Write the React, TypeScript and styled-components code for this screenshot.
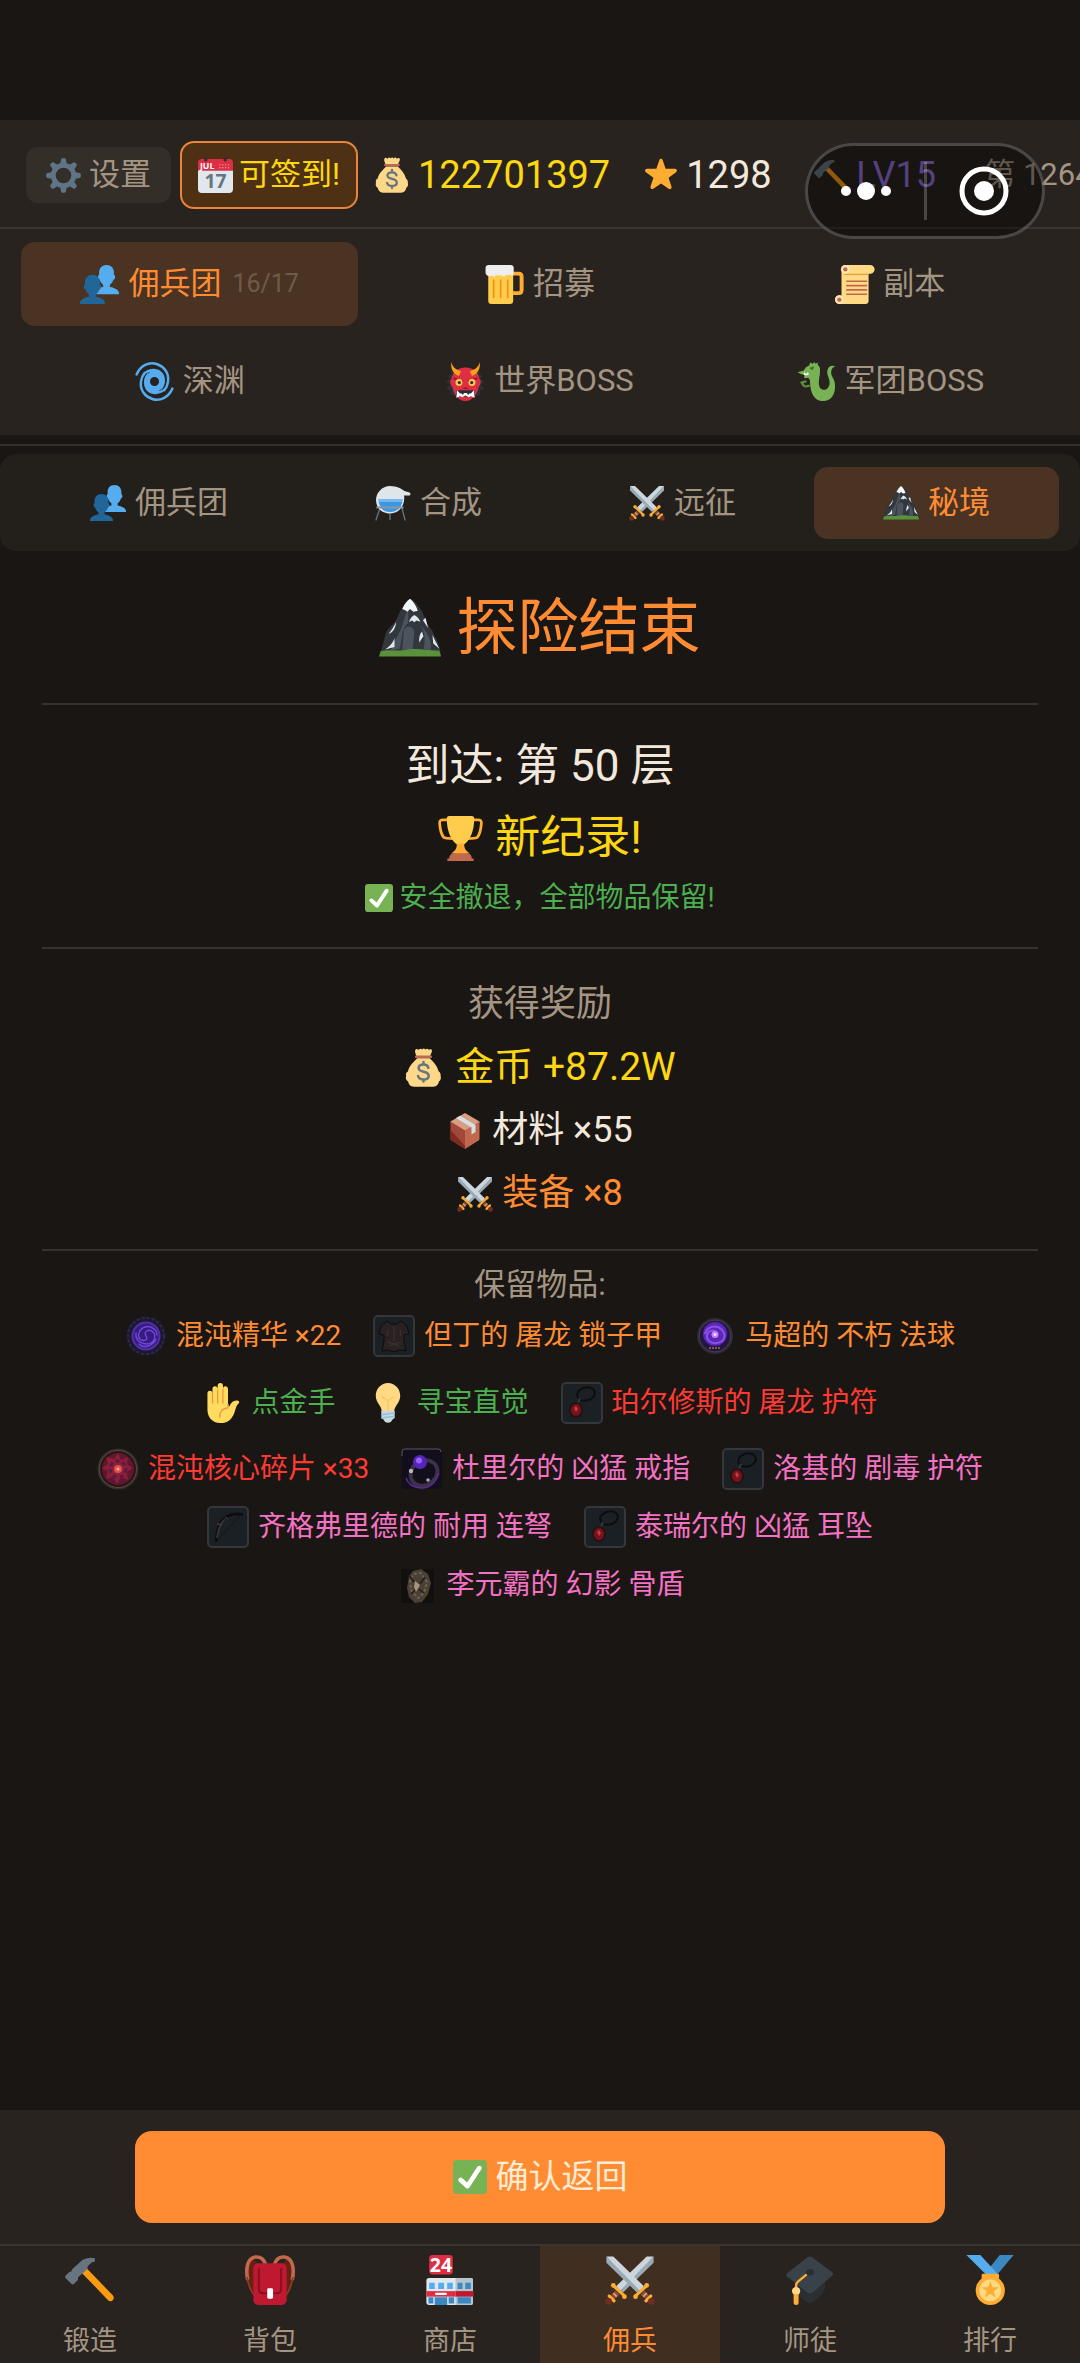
import React from "react";
import styled, { createGlobalStyle, css } from "styled-components";

const color = {
  page: "#1a1613",
  panel: "#28231f",
  subPanel: "#23201c",
  line: "#3b3430",
  active: "#4a3323",
  orange: "#ff8c33",
  gold: "#fdd70f",
  muted: "#a49583",
  cream: "#f3e8dc",
  green: "#4caf50",
  red: "#ff3a33",
  pink: "#f472c4",
};

const GlobalStyle = createGlobalStyle`
  *, *::before, *::after { box-sizing: border-box; }
  body {
    margin: 0;
    background: ${color.page};
    color: ${color.cream};
    font-family: Roboto, "Noto Sans CJK SC", sans-serif;
  }
  button {
    margin: 0;
    padding: 0;
    border: 0;
    background: none;
    color: inherit;
    font: inherit;
    cursor: pointer;
  }
  h1, h2, p, ul { margin: 0; padding: 0; font-weight: 400; }
  ul { list-style: none; }
`;

/* ---------- icons ---------- */

const Glyph = styled.svg<{ $size: number }>`
  display: block;
  flex: none;
  width: ${(p) => p.$size}px;
  height: ${(p) => p.$size}px;
  overflow: visible;
`;

const Bust = ({ fill }: { fill: string }) => (
  <path
    fill={fill}
    d="M14.6 20.4v-2.2c1.5-1 2.8-2.700 3.300-4.800.9 0 1.500-1 1.500-2.200 0-1-.5-1.900-1.100-2.100C19 4 16.600 0 11.500 0S4 4 4.700 9.100c-.6.200-1.100 1.100-1.100 2.100 0 1.200.6 2.200 1.500 2.200.5 2.100 1.800 3.800 3.300 4.800v2.200C4 21.100 0 23.300 0 26v1h23v-1c0-2.700-4-4.900-8.400-5.600z"
  />
);

const drawings = {
  people: (
    <>
      <g transform="translate(13 0)"><Bust fill="#55acee" /></g>
      <g transform="translate(0 9)"><Bust fill="#226699" /></g>
    </>
  ),
  gear: (
    <g fill="none" stroke="#5f7485">
      <circle cx="18" cy="18" r="10.500" strokeWidth="5" />
      <g fill="#5f7485" stroke="none">
        {[0, 45, 90, 135, 180, 225, 270, 315].map((a) => (
          <path key={a} transform={`rotate(${a} 18 18)`} d="M14.500 7l1-5.500Q15.800.200 17 .200h2q1.200 0 1.500 1.300l1 5.500z" />
        ))}
      </g>
    </g>
  ),
  calendar: (
    <>
      <path fill="#e1e8ed" d="M0 10h36v22a4 4 0 0 1-4 4H4a4 4 0 0 1-4-4z" />
      <path fill="#dd2e44" d="M0 5a4 4 0 0 1 4-4h28a4 4 0 0 1 4 4v8H0z" />
      <g fill="#292f33"><circle cx="8" cy="1.800" r="1.800" /><circle cx="28" cy="1.800" r="1.800" /></g>
      <g fill="#f4abba">
        {[22.500, 25.500, 28.500, 31.500].map((x) => (
          <React.Fragment key={x}><circle cx={x} cy="7" r=".7" /><circle cx={x} cy="10" r=".7" /></React.Fragment>
        ))}
      </g>
      <text x="2" y="11" fill="#fff" fontFamily="Open Sans, sans-serif" fontWeight="700" fontSize="9">JUL</text>
      <text x="18" y="31" fill="#66757f" textAnchor="middle" fontFamily="Open Sans, sans-serif" fontWeight="700" fontSize="20">17</text>
    </>
  ),
  bag: (
    <>
      <path fill="#fdd888" d="M31.900 21.500c1.300.800 2.300 2.500 1.900 4.300.8 2.200-.2 4.200-1.600 5.200-.3 2.600-2 4.700-5 4.700H9c-3 0-4.800-2-5.200-4.700-1.700-1-2.700-3.200-1.800-5.400-.6-1.600.1-3.200 1.600-4 1.400-5.800 5.200-8.600 8.600-12.200h11.600c3.400 3.600 6.700 6.400 8.100 12.100z" />
      <path fill="#fdd888" d="M11.500 7.500C11 5.500 9.500 3.500 10.500 1.500c.7-1.400 2-.2 3 .2 1-.9 2-1.700 3.200-.4 1-1.300 2.300-1 3 .1 1.200-1.200 2.300-1 3.200.3 1.200-.8 2.700-1 2.900.5.200 1.600-1.300 3.600-1.800 5.300z" />
      <path fill="#bf6952" d="M11 7h14q.9 0 .9 1.100T25 9.200H11q-.9 0-.9-1.100T11 7z" />
      <path fill="none" stroke="#67757f" strokeWidth="2.300" strokeLinecap="round" d="M18 13v2m0 14v2M22.500 18.300c-.5-2-2.200-3-4.500-3s-4.500 1-4.500 3.200c0 4.700 9.300 2.200 9.300 7 0 2.400-2.200 3.500-4.800 3.500-2.700 0-4.500-1.200-5-3.200" />
    </>
  ),
  star: (
    <path fill="#ffac33" d="M27.300 33c-.4 0-.8-.1-1.200-.4L18 26.900l-8.100 5.700c-1.400 1-3.500-.3-3-2.500l3.100-9.300-8-5.700c-1.500-1.200-.8-3.500 1.100-3.600l10-.1 3.200-9.300c.6-1.700 2.800-1.700 3.400 0l3.200 9.300 10 .1c1.900.1 2.600 2.400 1.100 3.600l-8 5.700 3.100 9.300c.4 1.500-.6 2.900-1.800 2.900z" />
  ),
  hammer: (
    <>
      <path fill="#f99b12" d="M12 12.700l3.400-3.300 19 19.600c1 1 1 2.500 0 3.500-.9 1-2.500 1-3.400 0z" />
      <path fill="#66757f" d="M21.500 2.400c-3.200-1-7.600 0-10.200 2.200L5.600 9.900C4.900 10.600 5 11.600 4.300 12l-1.200.2-2.600 2.500c-.6.600-.5 1.500 0 2l4 4c.6.600 1.500.6 2.100 0l2.500-2.500c.6-.6-.1-1.800.5-2.400l6-5.200c.8-.7.3-1.500 1-2.600 1.200-1.800 2.900-3.300 4.900-3.400z" />
    </>
  ),
  beer: (
    <>
      <path fill="none" stroke="#ffac33" strokeWidth="3.600" d="M26 8h5q2.800 0 2.800 2.800V23q0 3-3 3H25" />
      <path fill="#ffcc4d" d="M3 8h23v25q0 3-3 3H6q-3 0-3-3z" />
      <path fill="none" stroke="#f4900c" strokeWidth="1.500" strokeLinecap="round" d="M8 14v16M14.500 14v16M21 14v16" />
      <path fill="#eee" d="M3.500 0h20q3 0 3 3v5q0 1.800-1.600 1.800-1.500 0-2-1.300-1.300 1.500-3.200.3c-.8 2.300-4 2.300-4.700.3-1.800 1.400-3.300.4-4-.3-1 2.500-4 2-4.600 1-2.500 1.600-5.900-.1-5.900-2.800V3q0-3 3-3z" />
    </>
  ),
  scroll: (
    <>
      <path fill="#ffd983" d="M9 0h23a4 4 0 0 1 1 8h-2v25a3 3 0 0 1-3 3H4a4 4 0 1 1 1-7.900h1V4a4 4 0 0 1 3-4z" />
      <path fill="#e39f3d" d="M9 8h22v1.200H8z" />
      <circle cx="9.500" cy="4" r="4" fill="#ffe8b6" /><circle cx="9.500" cy="4" r="2" fill="#c1694f" />
      <circle cx="4" cy="32" r="4" fill="#ffe8b6" /><circle cx="4" cy="32" r="2" fill="#c1694f" />
      <path stroke="#c1694f" strokeWidth="1.600" strokeLinecap="round" d="M11 15h18M11 19h18M11 23h18M11 27h18" />
    </>
  ),
  spiral: (
    <>
      <circle cx="18" cy="18" r="6.800" fill="none" stroke="#55acee" strokeWidth="5.200" />
      {[0, 180].map((a) => (
        <g key={a} transform={`rotate(${a} 18 18)`} fill="none" stroke="#55acee" strokeLinecap="round">
          <path fill="#55acee" stroke="none" d="M5 17C6 9 13 5.500 19 6.500c6 1 9.500 6 8.500 12.500-.6 3-1.500 5-3.500 7 0-8-2-15-8-16.500-5-.5-9 2-11 7.500z" />
          <path strokeWidth="2.300" d="M1.500 11.500C5 3 13-.500 20 1.800c7 2.400 11.500 8.500 10.500 16-.4 3.700-1.600 6-3.500 8.200" />
        </g>
      ))}
    </>
  ),
  ogre: (
    <>
      <path fill="#2a3438" d="M4 9l2 2-4 2 3 3-5 2 4 3-4 4 5 1-1 4 6 2h16l6-2-1-4 5-1-4-4 4-3-5-2 3-3-4-2 2-2z" />
      <path fill="#dd2e44" d="M18 5c-8 0-12 5-13 11-2 0-1 6 1 7 1 6 5 13 12 13s11-7 12-13c2-1 3-7 1-7C30 10 26 5 18 5z" />
      <path fill="#f9a01b" d="M12 13C6 11 4 5 5 0c1 5 4 7 9 8.500zM24 13c6-2 8-8 7-13-1 5-4 7-9 8.500z" />
      <path fill="#a0122a" d="M7 14l9 3-1 2-8-3zM29 14l-9 3 1 2 8-3zM15 25l3-2 3 2z" />
      <circle cx="12" cy="19" r="3.200" fill="#ffcc4d" /><circle cx="24" cy="19" r="3.200" fill="#ffcc4d" />
      <circle cx="12.300" cy="19" r="1.500" fill="#292f33" /><circle cx="23.700" cy="19" r="1.500" fill="#292f33" />
      <path fill="#292f33" d="M10 26h16l1 6H9z" />
      <path fill="#fff" d="M9.500 33l.8-7 2.700 3h1.500l1 1.500 1.200-2h2.600l1.200 2 1-1.500H23l2.700-3 .8 7-3.500-1.500-2 1-3-1.500-3 1.500-2-1z" />
    </>
  ),
  dragon: (
    <>
      <path fill="#77b255" d="M12 17c0 8 2 19 12 19 8 0 12-7 11-16-.6-6-5-7-3-13 .5-1.500 2-2.500 3.500-3-4-1.500-7 .500-7.500 4-.6 5 2.600 7 2 12-.5 4-3 6-6 5.500-5-.8-4-8-3-14 .6-5 .500-7-2-9l.500-2-2.500 1L16 0l-1.500 1.500L12 .500 11.500 3 8 5 6 8 .500 9.500 3.500 11 7 12l-.5 3 4-.5z" />
      <path fill="#3e721d" d="M11 5.500l5-1.500-1.500 3.500z" />
      <path fill="#fff" d="M6 11l1-1.500 1.300 1.500L10 9.500l1 1.500-1 1.200H7z" />
      <path fill="none" stroke="#5c913b" strokeWidth="2" strokeLinecap="round" d="M5 20c1 3 3 3 6 2M8 18l-4 1" />
    </>
  ),
  alembic: (
    <>
      <path fill="none" stroke="#66757f" strokeWidth="1.300" strokeLinecap="round" d="M5 23L1 35M27 23l3 12M15 29v5.500" />
      <path fill="#dfe5e9" d="M15 1C22 1 27 4 29.500 6L34.500 7.500c1.500.6 1.200 3-.5 3L29 10.500c1.500 8-3.500 18-14 18C6 28.500 1 22 1 15S7 1 15 1z" />
      <path fill="#3d97e0" d="M3.500 14h24c.4 7-4.500 13-12.500 13S3.500 21 3.500 14z" />
      <path fill="#6fbaf3" d="M3.500 14h24l-.8 3H4z" />
      <path fill="#8899a6" d="M1.500 21.500h27v2h-27z" />
    </>
  ),
  swords: (
    <>
      {[false, true].map((flip) => (
        <g key={String(flip)} transform={flip ? "translate(36 0) scale(-1 1)" : undefined}>
          <path fill="#99aab5" d="M35 1v4.500L13 27l-4-3.500z" />
          <path fill="#ccd6dd" d="M35 1h-5L8 22.500l3 3z" />
          <path fill="#8a4b38" d="M7.500 25.500l3 3-6 5.500L2 31.500z" />
          <path stroke="#d99e82" strokeWidth="1.300" d="M6 27.500l2.500 2.500" />
          <path stroke="#ffac33" strokeWidth="2.200" strokeLinecap="round" d="M6 22l8 7.500M3 29.500l3.500 3.500" />
          <circle cx="6" cy="21.800" r="1.700" fill="#ffac33" /><circle cx="14" cy="30" r="1.700" fill="#ffac33" />
          <circle cx="2.600" cy="33.400" r="2.400" fill="#6e2f22" />
        </g>
      ))}
    </>
  ),
  mountain: (
    <>
      <path fill="#31373d" d="M18 1C15 3 12 9 10 13c-1 2.500-5 5-6 8s-2 9-4 13h36c-.5-5-2-9-4-12-1-4-4-5-5-9-1.500-5-6-11-9-12z" />
      <path fill="#4b545d" d="M17 8c-3 3-2.500 9-6 14-1.500 2.500-3 6-4 9l5-1c1.500-6 1-12 5-15zM23 16c4 3 4 9 3 14l4 1c1-5-2-12-7-15zM14.500 19c2-3 5-2 6 1l-1 11h-6z" />
      <path fill="#f5f8fa" d="M18 1c-2 1.500-3.500 3.500-4.500 6l1.500.5 1.500 1L18 7l2 1.500 2.500-.5C21.500 5 20 2.500 18 1z" />
      <path fill="#e1e8ed" d="M20.500 10.500c-1.500.8-2.500 2.300-3 4l1.700-.8 1.300.9 1.300-1 2.200.8c-.5-1.600-2-3.200-3.500-3.900zM10 14.500c-1.500 3-3 5-4.500 7 2.500-1 4-3 4.500-7zM27 12l1.500 6-3-4.500zM9 24c-1 3-3 5-5.500 6.500L9 29zM25 20c-1.500 1.500-2 4-1.500 6.500.7-1.500 1.500-2.500 2.300-3.500zM31 22l4 8-3.500-3z" />
      <path fill="#5c913b" d="M1 31.500c6-1.500 10 .500 16-1 7-1 12 1 18 .5l1 3.500H0z" />
    </>
  ),
  trophy: (
    <>
      <path fill="none" stroke="#ffac33" strokeWidth="2.200" d="M9 3H4Q1 3 1.300 6 2 14 4.500 17q1 1 8 1M27 3h5q3 0 2.700 3-.7 8-3.200 11-1 1-8 1" />
      <path fill="#ffcc4d" d="M7 2q0-2 2-2h18q2 0 2 2c0 11-4 18-8 20.500v3L23 30H13l2-4.500v-3C11 20 7 13 7 2z" />
      <path fill="#ffac33" d="M15.500 22h5c.3 4 2 6 5 8H10.500c3-2 4.700-4 5-8z" />
      <path fill="#c1694f" d="M9 34q0-4 4-4h10q4 0 4 4h1.500v2h-21v-2z" />
    </>
  ),
  check: (
    <>
      <rect width="36" height="36" rx="4" fill="#77b255" />
      <path fill="#fff" d="M29.280 6.362c-1.156-.751-2.704-.422-3.458.736L14.936 23.877l-5.029-4.650c-1.014-.938-2.596-.875-3.533.138-.937 1.014-.875 2.596.139 3.533l7.209 6.666c.480.445 1.090.665 1.696.665.673 0 1.534-.282 2.099-1.139.332-.506 12.500-19.270 12.500-19.270.751-1.159.421-2.707-.737-3.458z" />
    </>
  ),
  parcel: (
    <>
      <path fill="#d99e82" d="M18 0L3.500 8.500v1L18 18l14.500-8.500v-1z" />
      <path fill="#a3473a" d="M3.500 8.500L18 17.500V36L4.500 27.500q-1-.7-1-2z" />
      <path fill="#c1694f" d="M32.500 8.500L18 17.500V36l13.500-8.500q1-.7 1-2z" />
      <path fill="#7e2a20" d="M3.500 17L18 33v3L4.500 27.500q-1-.7-1-2z" />
      <path fill="#d5dfe6" d="M9 5l4-2.300L28.500 12v7l-4 2.500v-7z" />
    </>
  ),
  hand: (
    <>
      <path fill="#ffdc5d" d="M4 9.500q0-2.500 2.200-2.500t2.300 2.500V6q0-3 2.300-3t2.400 3V3q0-3 2.400-3T18 3v3q0-3 2.200-3t2.300 3v14.500l1.500.5c.6-3 4-6 7.500-5 1.500.4 1.400 1.800.2 2.800C29 21 29.500 26 26 31c-2 3-5 5-10.500 5C8 36 4 30 4 24z" />
      <path fill="none" stroke="#ef9645" strokeWidth="1.200" strokeLinecap="round" d="M8.600 9v9M13.200 7v11M17.900 6v12M22.500 19v3.500c-5 0-8 4-7.500 8.500" />
    </>
  ),
  bulb: (
    <>
      <path fill="#ffd983" d="M29 11.500C29 18 23.500 20.500 23.500 26h-11C12.500 20.500 7 18 7 11.500 7 5 12 0 18 0s11 5 11 11.500z" />
      <path fill="none" stroke="#ffc765" strokeWidth="1.300" d="M12.500 12l5.500 4 5.500-4M18 16v9" />
      <path fill="#ccd6dd" d="M12 25h12v6q0 1-1.500 1.500L20.500 35q-2.500 1.500-5 0l-2-2.500Q12 32 12 31z" />
      <path stroke="#8ebfdf" strokeWidth="1.300" d="M12 28.500l12-1.500M12 31.500l12-1.500" />
    </>
  ),
  backpack: (
    <>
      <path fill="#662113" d="M5 2C0 5 0 13 2 20c1 5 3 9 7 11V6zM31 2c5 3 5 11 3 18-1 5-3 9-7 11V6z" />
      <path fill="none" stroke="#c1694f" strokeWidth="2.600" d="M15 8C14 3 11 1 7.500 1.500 1 2.500.500 11 2 18M21 8c1-5 4-7 7.500-6.500C35 2.500 35.500 11 34 18" />
      <path fill="none" stroke="#8a3b28" strokeWidth="1.200" d="M1.500 16c1 6 3 11 6 14M34.500 16c-1 6-3 11-6 14" />
      <rect x="6" y="6" width="24" height="30" rx="3.500" fill="#be1931" />
      <path fill="none" stroke="#8f0d22" strokeWidth="1.500" d="M10 9.500v15q0 3 3 3h10q3 0 3-3v-15" />
      <rect x="16" y="24" width="4.200" height="7.500" rx="1" fill="#fff" />
    </>
  ),
  store: (
    <>
      <rect x="3" width="17" height="14" rx="2.500" fill="#dd2e44" />
      <text x="11.500" y="12" fill="#fff" textAnchor="middle" fontFamily="Open Sans, sans-serif" fontWeight="700" fontSize="14">24</text>
      <path fill="#e1e8ed" d="M1 18.500q0-2 2-2h30q1.500 0 1.500 1.500v16.500q0 1.500-1.500 1.500H3q-2 0-2-2z" />
      <path fill="#b5c3cd" d="M22 16.500h11.500q1 0 1 1.500v16.500q0 1.500-1.500 1.500H22z" />
      <path fill="#55acee" d="M3 20h4v4.500H3zM9.500 20h4.200v4.500H9.500zM16 20h4v4.500h-4z" />
      <path fill="#3b88c3" d="M23.500 20h3.500v4.500h-3.500zM29 20h4v4.500h-4zM23.500 30.500h9.500V35h-9.500zM2.500 30.500H6V35H2.500zM7 30.500h9V36H7zM17 30.500h4V35h-4z" />
      <path fill="#dd2e44" d="M1 26h21v4H1z" /><path fill="#be1931" d="M22 26h13v4H22z" />
      <path stroke="#fff" strokeWidth="1.500" strokeLinecap="round" d="M8 28h7" />
    </>
  ),
  cap: (
    <>
      <path fill="#292f33" d="M8 21l10 4 11-8v5c0 3-1 5-3 7l-6 5c-1.500 1-3 1-4.500 0L10 29z" />
      <path fill="#394149" d="M16.500 1.500q1.500-1 3 0L34 12.500q1.300 1 0 2.200L20 27q-2 1.500-4 0L1.500 15.500q-1.300-1.200 0-2.300z" />
      <ellipse cx="18" cy="12.500" rx="3" ry="2.300" fill="#292f33" />
      <path fill="none" stroke="#ffac33" strokeWidth="1.800" strokeLinecap="round" d="M15 14.500L9.500 19q-1.500 1.200-1.500 3v3" />
      <circle cx="8" cy="26" r="3" fill="#ffd983" />
      <path fill="#ffac33" d="M6.200 28h3.600v6.500q0 1.500-1.800 1.500t-1.800-1.500z" />
    </>
  ),
  medal: (
    <>
      <path fill="#3b88c3" d="M25 0h10L22.500 15l-5.500-5z" />
      <path fill="#55acee" d="M1 0h10l12 13-5 4z" />
      <path fill="#ffac33" d="M13 13.500h10.500q1 0 1 1v2.500H12v-2.500q0-1 1-1z" />
      <circle cx="18.200" cy="25.500" r="10.500" fill="#ffac33" />
      <circle cx="18.200" cy="25.500" r="7.800" fill="#ffd983" />
      <path fill="#ffac33" d="M18.200 19l1.600 4.300h4.600l-3.700 2.800 1.400 4.500-3.900-2.700-3.900 2.700 1.400-4.500-3.700-2.800h4.600z" />
    </>
  ),
};

type IconName = keyof typeof drawings;

const Icon = ({ name, size }: { name: IconName; size: number }) => (
  <Glyph $size={size} viewBox="0 0 36 36" aria-hidden="true">{drawings[name]}</Glyph>
);

/* ---------- item artwork ---------- */

const Tile = () => (
  <rect x="1" y="1" width="40" height="40" rx="4" fill="#1b2025" stroke="#34373b" strokeWidth="2" />
);

const artwork = {
  essence: (
    <>
      <circle cx="21" cy="21" r="20" fill="#1d1730" />
      <circle cx="21" cy="21" r="18" fill="none" stroke="#2f2a44" strokeWidth="2" strokeDasharray="3 2" />
      <circle cx="21" cy="21" r="13.500" fill="#371b80" stroke="#4f32a6" strokeWidth="2" />
      <path fill="none" stroke="#7148d6" strokeWidth="1.400" strokeLinecap="round" d="M21 21c-3-4 3-8 7-4s1 12-6 12-12-5-11-11M21 21c3 4-3 6-6 3s-1-10 5-12 12 3 12 8M14 29c5 5 14 2 17-5" />
    </>
  ),
  armor: (
    <>
      <Tile />
      <path fill="#2a2222" stroke="#0c0a0a" d="M14 6l4 3h6l4-3 6 5 2 8-5 1v6l2 10-6-1-6 2-6-2-6 1 2-10v-6l-5-1 2-8z" />
      <path fill="none" stroke="#41322f" d="M21 12v14M14 27l7 2 7-2M16 31l5-2 5 2M15 15l-1 6M27 15l1 6" />
    </>
  ),
  orb: (
    <>
      <circle cx="21" cy="21" r="18" fill="#2f2936" />
      <circle cx="21" cy="21" r="16" fill="#24163e" stroke="#4a3f55" />
      <circle cx="21" cy="19" r="12" fill="#5a27b8" />
      <path fill="none" stroke="#8a52e0" strokeWidth="2" d="M11 19c2-8 12-10 17-4s2 12-5 13-11-4-10-8 6-6 9-3" />
      <circle cx="21" cy="19.500" r="3.500" fill="#c879ff" /><circle cx="21" cy="19.500" r="1.500" fill="#ffe0ff" />
      <path stroke="#7b5a4a" strokeWidth="2" strokeDasharray="2 1" d="M15 33h12" />
    </>
  ),
  amulet: (
    <>
      <Tile />
      <ellipse cx="25" cy="12" rx="9" ry="6.500" fill="none" stroke="#0c0d10" strokeWidth="2" transform="rotate(-15 25 12)" />
      <path stroke="#35383d" strokeWidth="2" d="M19 16l-2 5" />
      <ellipse cx="15" cy="28" rx="7" ry="8" fill="#231314" />
      <ellipse cx="15" cy="28" rx="5" ry="6" fill="#7a121b" />
      <path fill="#c23c42" d="M13 26l2-2 2 3-2 3z" />
    </>
  ),
  core: (
    <>
      <circle cx="21" cy="21" r="20.500" fill="#35302a" />
      <circle cx="21" cy="21" r="18.500" fill="#2a1418" stroke="#574a3c" />
      <circle cx="21" cy="21" r="16" fill="#5f1630" />
      <path fill="#8c1f36" d="M21 5l3 7 7-3-1 7 6 4-6 4 1 8-7-3-4 7-4-7-7 2 2-8-6-3 6-4-2-7 8 2z" />
      <circle cx="21" cy="21" r="8" fill="none" stroke="#561a4c" strokeWidth="3" strokeDasharray="4 3" />
      <circle cx="21" cy="21" r="4" fill="#e2504c" /><circle cx="21" cy="21" r="1.500" fill="#ffb09a" />
    </>
  ),
  ring: (
    <>
      <rect x="1" y="1" width="40" height="40" rx="4" fill="#120e1b" />
      <path fill="none" stroke="#5b5862" d="M1 8V4q0-3 3-3h33q3 0 3 3" />
      <ellipse cx="23" cy="25" rx="14" ry="12" fill="none" stroke="#3a3248" strokeWidth="4" transform="rotate(-35 23 25)" />
      <path fill="none" stroke="#5f2a90" strokeWidth="1.500" d="M5 30q3 9 15 10t18-15" />
      <circle cx="19" cy="14" r="7" fill="#5524b8" /><circle cx="18" cy="12.500" r="3" fill="#9b60fa" />
      <circle cx="10" cy="23" r="2.200" fill="#b9b4c4" /><circle cx="27" cy="32" r="1.800" fill="#a9a3b8" />
    </>
  ),
  bow: (
    <>
      <Tile />
      <path fill="none" stroke="#0e0e10" strokeWidth="3" d="M9 36q1-18 9-24t18-3" />
      <path fill="none" stroke="#44383a" strokeWidth="1.500" d="M10 32q2-14 8-19M10 18l5 1M18 11l3 2" />
      <path stroke="#14161a" d="M10 34L34 9" />
    </>
  ),
  shield: (
    <>
      <rect x="5" y="5" width="33" height="34" fill="#11100f" />
      <path fill="#4a4035" d="M17 7l8-2 7 5 3 9-3 11-6 8-7 1-6-6-2-9 2-12z" />
      <path fill="none" stroke="#6f6250" strokeWidth="2" strokeDasharray="3 2" d="M18 10l7-1 6 9-3 11-6 5-7-8-1-10z" />
      <path fill="#a3957e" d="M19 17l5 4-4 7-2-5z" />
      <path stroke="#231d18" strokeWidth="1.500" d="M14 12l4 6M29 13l-5 7M15 30l4-4M28 29l-5-4" />
    </>
  ),
};

type ArtName = keyof typeof artwork;

const Art = ({ name }: { name: ArtName }) => (
  <Glyph $size={42} viewBox="0 0 42 42" aria-hidden="true">{artwork[name]}</Glyph>
);

/* ---------- layout ---------- */

const Page = styled.div`
  position: relative;
  display: flex;
  flex-direction: column;
  min-height: 100vh;
  padding-top: 120px;
  overflow: hidden;
`;

const Header = styled.header`
  display: flex;
  align-items: center;
  gap: 9px;
  padding: 21px 26px 18px;
  border-bottom: 2px solid ${color.line};
  background: ${color.panel};
  overflow: hidden;
`;

const HeaderButton = styled.button<{ $highlight?: boolean }>`
  display: flex;
  flex: none;
  align-items: center;
  gap: 8px;
  height: 56px;
  padding: 0 20px;
  border-radius: 12px;
  background: #342e29;
  color: ${color.muted};
  font-size: 31px;
  line-height: 40px;
  ${(p) =>
    p.$highlight &&
    css`
      gap: 6px;
      height: 68px;
      padding: 0 16px;
      border: 2px solid #e8853a;
      border-radius: 14px;
      background: #4e3114;
      color: ${color.gold};
    `}
`;

const Stats = styled.div`
  display: flex;
  flex: none;
  gap: 34px;
  margin-left: 7px;
`;

const Stat = styled.span<{ $tone: string; $size: number }>`
  display: flex;
  align-items: center;
  gap: 8px;
  min-width: 136px;
  color: ${(p) => p.$tone};
  font-size: ${(p) => p.$size}px;
  line-height: 48px;
  white-space: nowrap;
`;

const Capsule = styled.div`
  position: absolute;
  top: 143px;
  right: 35px;
  display: flex;
  align-items: center;
  width: 240px;
  height: 96px;
  border: 3px solid rgba(255, 255, 255, 0.22);
  border-radius: 48px;
  background: rgba(0, 0, 0, 0.42);
`;

const CapsuleButton = styled.button`
  display: flex;
  flex: 1;
  align-items: center;
  justify-content: center;
  height: 100%;
`;

const CapsuleDivider = styled.span`
  width: 3px;
  height: 58px;
  background: rgba(255, 255, 255, 0.22);
`;

const MainTabs = styled.nav`
  display: grid;
  grid-template-columns: repeat(3, 1fr);
  gap: 13px;
  padding: 13px 21px 12px;
  background: ${color.panel};
`;

const Tab = styled.button<{ $active?: boolean; $height: number }>`
  display: flex;
  flex: 1 1 auto;
  align-items: center;
  justify-content: center;
  gap: 9px;
  height: ${(p) => p.$height}px;
  border-radius: 14px;
  background: ${(p) => (p.$active ? color.active : "transparent")};
  color: ${(p) => (p.$active ? color.orange : color.muted)};
  font-size: 31px;
  line-height: 40px;
  white-space: nowrap;
`;

const TabCount = styled.small`
  margin-left: 2px;
  color: #705b4a;
  font-size: 25px;
`;

const Rule = styled.hr`
  width: 100%;
  height: 2px;
  margin: 9px 0 8px;
  border: 0;
  background: #35302b;
`;

const SubTabs = styled.nav`
  display: flex;
  gap: 9px;
  padding: 13px 21px 12px;
  border-radius: 16px;
  background: ${color.subPanel};
`;

const Result = styled.main`
  display: flex;
  flex: 1;
  flex-direction: column;
  padding: 0 42px;
  text-align: center;
`;

const Section = styled.section<{ $top: number; $bottom: number }>`
  padding: ${(p) => p.$top}px 0 ${(p) => p.$bottom}px;
  border-bottom: 2px solid #36312d;
`;

const Title = styled.h1`
  display: flex;
  align-items: center;
  justify-content: center;
  gap: 15px;
  color: ${color.orange};
  font-size: 61px;
  line-height: 62px;
`;

const Line = styled.p<{ $tone?: string; $size: number; $height: number; $gap?: number }>`
  display: flex;
  align-items: center;
  justify-content: center;
  gap: ${(p) => p.$gap ?? 12}px;
  color: ${(p) => p.$tone ?? color.cream};
  font-size: ${(p) => p.$size}px;
  line-height: ${(p) => p.$height}px;
`;

const KeptTitle = styled.h2`
  margin-bottom: 6px;
  padding-top: 10px;
  color: ${color.muted};
  font-size: 31px;
  line-height: 48px;
`;

const KeptList = styled.ul`
  display: flex;
  flex-wrap: wrap;
  align-items: center;
  justify-content: center;
  gap: 16px 32px;
  padding: 0 32px;
`;

const KeptItem = styled.li<{ $tone: string; $tall: boolean }>`
  display: flex;
  align-items: center;
  gap: 9px;
  height: ${(p) => (p.$tall ? 59 : 42)}px;
  color: ${(p) => p.$tone};
  font-size: 28px;
  line-height: 42px;
  white-space: nowrap;
`;

const ConfirmBar = styled.div`
  display: flex;
  justify-content: center;
  padding: 21px 0;
  background: ${color.panel};
`;

const ConfirmButton = styled.button`
  display: flex;
  align-items: center;
  justify-content: center;
  gap: 9px;
  width: 75%;
  height: 92px;
  border-radius: 17px;
  background: ${color.orange};
  color: #ffecd5;
  font-size: 33px;
  line-height: 40px;
`;

const BottomNav = styled.nav`
  display: grid;
  grid-template-columns: repeat(6, 1fr);
  border-top: 2px solid ${color.line};
  background: ${color.panel};
`;

const BottomTab = styled.button<{ $active?: boolean }>`
  display: flex;
  flex-direction: column;
  align-items: center;
  gap: 16px;
  padding: 9px 0 2px;
  background: ${(p) => (p.$active ? "#402e20" : "transparent")};
  color: ${(p) => (p.$active ? color.orange : color.muted)};
  font-size: 27px;
  line-height: 40px;
`;

/* ---------- data ---------- */

const mainTabs: { icon: IconName; label: string; count?: string }[] = [
  { icon: "people", label: "佣兵团", count: "16/17" },
  { icon: "beer", label: "招募" },
  { icon: "scroll", label: "副本" },
  { icon: "spiral", label: "深渊" },
  { icon: "ogre", label: "世界BOSS" },
  { icon: "dragon", label: "军团BOSS" },
];

const subTabs: { icon: IconName; label: string }[] = [
  { icon: "people", label: "佣兵团" },
  { icon: "alembic", label: "合成" },
  { icon: "swords", label: "远征" },
  { icon: "mountain", label: "秘境" },
];

const keptItems: { art?: ArtName; icon?: IconName; label: string; tone: string }[] = [
  { art: "essence", label: "混沌精华 ×22", tone: color.orange },
  { art: "armor", label: "但丁的 屠龙 锁子甲", tone: color.orange },
  { art: "orb", label: "马超的 不朽 法球", tone: color.orange },
  { icon: "hand", label: "点金手", tone: color.green },
  { icon: "bulb", label: "寻宝直觉", tone: color.green },
  { art: "amulet", label: "珀尔修斯的 屠龙 护符", tone: color.red },
  { art: "core", label: "混沌核心碎片 ×33", tone: color.red },
  { art: "ring", label: "杜里尔的 凶猛 戒指", tone: color.pink },
  { art: "amulet", label: "洛基的 剧毒 护符", tone: color.pink },
  { art: "bow", label: "齐格弗里德的 耐用 连弩", tone: color.pink },
  { art: "amulet", label: "泰瑞尔的 凶猛 耳坠", tone: color.pink },
  { art: "shield", label: "李元霸的 幻影 骨盾", tone: color.pink },
];

const bottomTabs: { icon: IconName; label: string }[] = [
  { icon: "hammer", label: "锻造" },
  { icon: "backpack", label: "背包" },
  { icon: "store", label: "商店" },
  { icon: "swords", label: "佣兵" },
  { icon: "cap", label: "师徒" },
  { icon: "medal", label: "排行" },
];

export default function App() {
  return (
    <>
      <GlobalStyle />
      <Page>
        <Header>
          <HeaderButton><Icon name="gear" size={35} />设置</HeaderButton>
          <HeaderButton $highlight><Icon name="calendar" size={35} />可签到!</HeaderButton>
          <Stats>
            <Stat $tone={color.gold} $size={38}><Icon name="bag" size={36} />122701397</Stat>
            <Stat $tone={color.cream} $size={38}><Icon name="star" size={34} />1298</Stat>
            <Stat $tone="#9370db" $size={36}><Icon name="hammer" size={34} />LV15</Stat>
            <Stat $tone={color.muted} $size={31}>第 1264</Stat>
          </Stats>
        </Header>

        <MainTabs aria-label="主菜单">
          {mainTabs.map((t, i) => (
            <Tab key={t.label} $active={i === 0} $height={84}>
              <Icon name={t.icon} size={39} />
              {t.label}
              {t.count && <TabCount>{t.count}</TabCount>}
            </Tab>
          ))}
        </MainTabs>
        <Rule />
        <SubTabs aria-label="佣兵菜单">
          {subTabs.map((t, i) => (
            <Tab key={t.label} $active={i === 3} $height={72}>
              <Icon name={t.icon} size={36} />
              {t.label}
            </Tab>
          ))}
        </SubTabs>

        <Result>
          <Section $top={46} $bottom={44}>
            <Title><Icon name="mountain" size={62} />探险结束</Title>
          </Section>
          <Section $top={25} $bottom={25}>
            <Line $size={44} $height={72}>到达: 第 50 层</Line>
            <Line $size={45} $height={72} $tone={color.gold}><Icon name="trophy" size={45} />新纪录!</Line>
            <Line $size={28} $height={48} $gap={6} $tone={color.green}><Icon name="check" size={28} />安全撤退，全部物品保留!</Line>
          </Section>
          <Section $top={24} $bottom={24}>
            <Line $size={36} $height={63} $tone={color.muted}>获得奖励</Line>
            <Line $size={39} $height={63} $tone={color.gold}><Icon name="bag" size={39} />金币 +87.2W</Line>
            <Line $size={36} $height={63} $gap={9}><Icon name="parcel" size={36} />材料 ×55</Line>
            <Line $size={36} $height={63} $gap={9} $tone={color.orange}><Icon name="swords" size={36} />装备 ×8</Line>
          </Section>
          <KeptTitle>保留物品:</KeptTitle>
          <KeptList>
            {keptItems.map((item) => (
              <KeptItem key={item.label} $tone={item.tone} $tall={Boolean(item.icon)}>
                {item.art && <Art name={item.art} />}
                {item.icon && <Icon name={item.icon} size={40} />}
                {item.label}
              </KeptItem>
            ))}
          </KeptList>
        </Result>

        <ConfirmBar>
          <ConfirmButton><Icon name="check" size={34} />确认返回</ConfirmButton>
        </ConfirmBar>
        <BottomNav aria-label="底部导航">
          {bottomTabs.map((t, i) => (
            <BottomTab key={t.label} $active={i === 3}>
              <Icon name={t.icon} size={50} />
              {t.label}
            </BottomTab>
          ))}
        </BottomNav>

        <Capsule>
          <CapsuleButton aria-label="更多">
            <svg width="52" height="20" viewBox="0 0 52 20" fill="#fff">
              <circle cx="6" cy="10" r="5" /><circle cx="26" cy="10" r="9" /><circle cx="46" cy="10" r="5" />
            </svg>
          </CapsuleButton>
          <CapsuleDivider />
          <CapsuleButton aria-label="关闭">
            <svg width="50" height="50" viewBox="0 0 50 50" fill="none">
              <circle cx="25" cy="25" r="22" stroke="#fff" strokeWidth="5" /><circle cx="25" cy="25" r="10" fill="#fff" />
            </svg>
          </CapsuleButton>
        </Capsule>
      </Page>
    </>
  );
}
